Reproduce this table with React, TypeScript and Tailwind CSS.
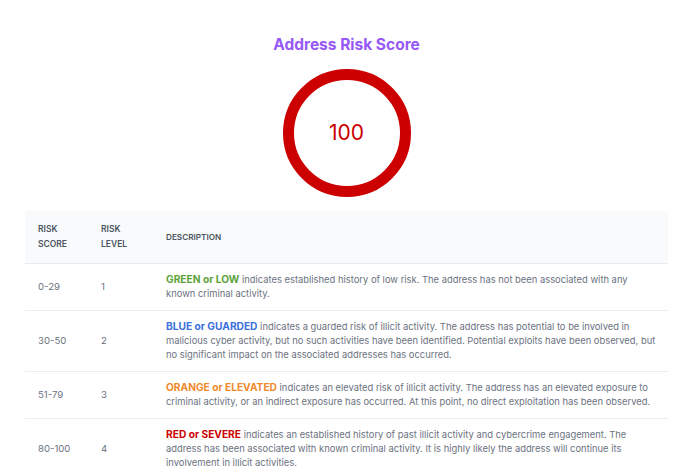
import React from "react";

const rows = [
  {
    score: "0-29",
    level: "1",
    label: "GREEN or LOW",
    color: "text-[#5da33c]",
    text: " indicates established history of low risk. The address has not been associated with any known criminal activity.",
  },
  {
    score: "30-50",
    level: "2",
    label: "BLUE or GUARDED",
    color: "text-[#3a6fdc]",
    text: " indicates a guarded risk of illicit activity. The address has potential to be involved in malicious cyber activity, but no such activities have been identified. Potential exploits have been observed, but no significant impact on the associated addresses has occurred.",
  },
  {
    score: "51-79",
    level: "3",
    label: "ORANGE or ELEVATED",
    color: "text-[#ef8a2c]",
    text: " indicates an elevated risk of illicit activity. The address has an elevated exposure to criminal activity, or an indirect exposure has occurred. At this point, no direct exploitation has been observed.",
  },
  {
    score: "80-100",
    level: "4",
    label: "RED or SEVERE",
    color: "text-[#cc0000]",
    text: " indicates an established history of past illicit activity and cybercrime engagement. The address has been associated with known criminal activity. It is highly likely the address will continue its involvement in illicit activities.",
  },
];

export default function App() {
  return (
    <div className="w-full min-h-[470px] bg-white font-['Inter',sans-serif]">
      <div className="pt-[34px] text-center text-[15.5px] leading-[22px] font-bold text-[#9658f6]">
        Address Risk Score
      </div>
      <div className="mt-[13px] flex justify-center">
        <div className="w-[128px] h-[128px] rounded-full border-[11px] border-[#cc0000] flex items-center justify-center text-[21px] text-[#cc0000]">
          100
        </div>
      </div>
      <div className="mx-[25px] mt-[14px]">
        <table className="w-full border-collapse text-left">
          <thead>
            <tr className="bg-[#f9fafb] border-b border-[#e9eaec]">
              <th className="w-[63px] pl-[13px] py-[11px] text-[8.5px] leading-[15px] font-semibold text-[#4b5563] align-middle">
                RISK
                <br />
                SCORE
              </th>
              <th className="w-[65px] pl-[13px] py-[11px] text-[8.5px] leading-[15px] font-semibold text-[#4b5563] align-middle">
                RISK
                <br />
                LEVEL
              </th>
              <th className="pl-[13px] pr-[12px] py-[11px] text-[8.2px] leading-[15px] font-semibold text-[#4b5563] align-middle">
                DESCRIPTION
              </th>
            </tr>
          </thead>
          <tbody>
            {rows.map((r) => (
              <tr key={r.score} className="border-b border-[#ececee]">
                <td className="pl-[13px] py-[9px] text-[9.6px] leading-[14px] text-[#6b7280] align-middle">
                  {r.score}
                </td>
                <td className="pl-[13px] py-[9px] text-[9.6px] leading-[14px] text-[#6b7280] align-middle">
                  {r.level}
                </td>
                <td className="pl-[13px] pr-[12px] py-[9px] text-[9.4px] leading-[14px] text-[#6b7280] align-middle">
                  <span className={`font-bold text-[10.2px] leading-none ${r.color}`}>{r.label}</span>
                  {r.text}
                </td>
              </tr>
            ))}
          </tbody>
        </table>
      </div>
    </div>
  );
}
